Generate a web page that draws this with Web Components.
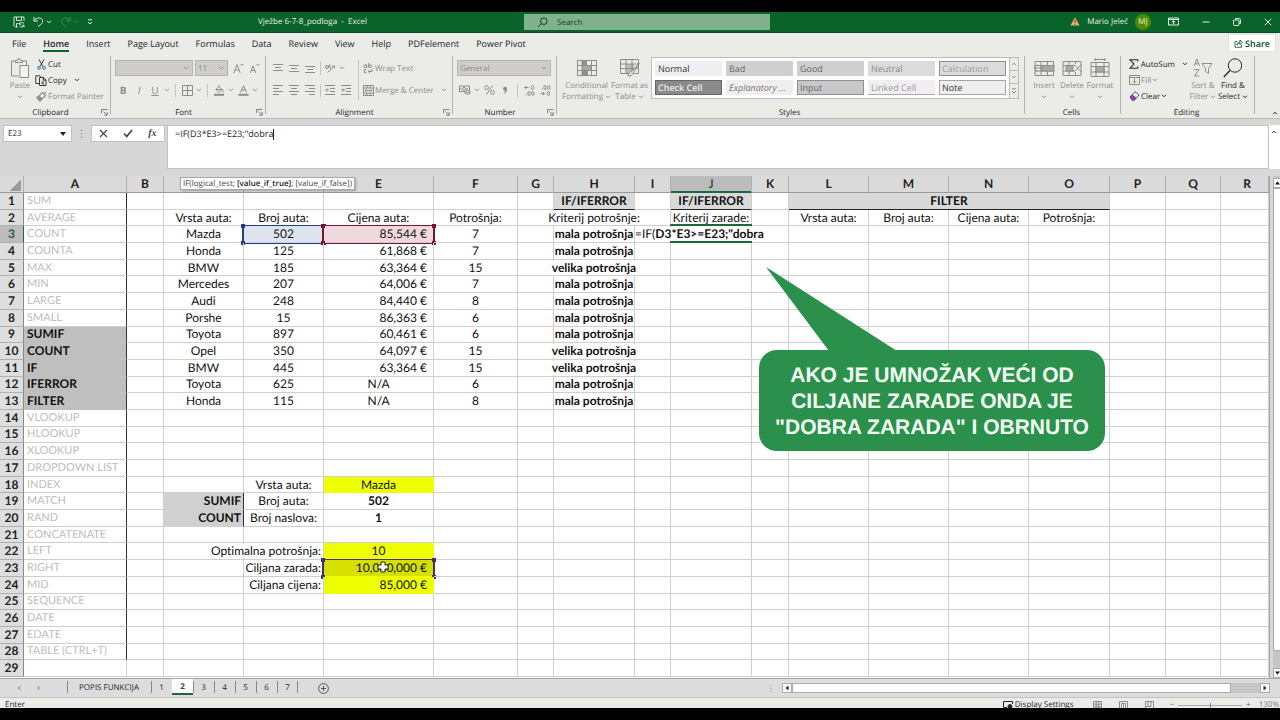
<!DOCTYPE html>
<html lang="hr">
<head>
<meta charset="utf-8">
<meta name="viewport" content="width=device-width, initial-scale=1">
<title>Vježbe 6-7-8_podloga - Excel</title>
<style>
    body{
        margin: 0;
        background: #000;
        font-family: "Open Sans", "Noto Sans", sans-serif;
        font-size: 8px;
        color: #262626;
        text-rendering: geometricPrecision;
        font-variant-ligatures: none;
    }
</style>
</head>
<body>
<excel-app></excel-app>
<script>
const svg = (w, h, body, extra = "") =>
    `<svg width="${w}" height="${h}" viewBox="0 0 ${w} ${h}" fill="none" stroke="currentColor" ${extra} aria-hidden="true">${body}</svg>`;

const ICONS = {
    chevron: svg(6, 4, `<path d="M1 .8 3 2.8 5 .8"/>`),
    up: svg(6, 4, `<path d="M1 3.2 3 1.2 5 3.2"/>`),
    more: svg(6, 6, `<path d="M1 .8H5M1 3 3 5 5 3"/>`),
    save: svg(12, 12, `<path d="M5 11H2.500L1 9.500V1H11V5M3.500 1V4.500H8.500V1M3.500 11V7.500H5.500M11 7.500A2.600 2.600 0 0 0 6.500 8.200M6.500 6.500V8.300H8.300M6.500 10A2.600 2.600 0 0 0 11 9.400M11 11.200V9.300H9.200" stroke-width=".9"/>`),
    undo: svg(11, 11, `<path d="M1 1V5H5M1.200 4.800C3 1.500 8 1 9.300 3.800 10.400 6.600 8 8.500 5 10.500"/>`),
    redo: svg(11, 11, `<path d="M10 1V5H6M9.800 4.800C8 1.500 3 1 1.700 3.800 .6 6.600 3 8.500 6 10.500"/>`),
    search: svg(11, 11, `<circle cx="6.800" cy="4.200" r="3.300"/><path d="M4.400 6.600 1 10"/>`),
    warn: svg(10, 9, `<path d="M5 .5 9.600 8.500H.4Z" fill="#f3b26b" stroke="none"/><path d="M5 3V6M5 6.800V7.800" stroke="#6b3500"/>`),
    ribbonView: svg(11, 9, `<path d="M.5 1H10.500V8H.5ZM.5 2.500H10.500M5.500 7V3.800M3.800 5.200 5.500 3.600 7.200 5.200"/>`),
    min: svg(8, 8, `<path d="M.5 4H7.500"/>`),
    restore: svg(8, 8, `<rect x=".5" y="2" width="5.500" height="5.500" rx="1"/><path d="M2.500 1.800V.6H6.300Q7.400 .6 7.400 1.800V5.500H6"/>`),
    close: svg(8, 8, `<path d="M.8 .8 7.200 7.200M7.200 .8 .8 7.200"/>`),
    share: svg(9, 9, `<path d="M3 2.500H1V8.300H7.500V6M2.800 6C3 3.800 4.500 3 6 3V1L8.500 3.500 6 5.500V4.200C4.500 4.200 3.500 4.800 2.800 6Z" stroke-width=".8"/>`),
    paste: svg(20, 22, `<path d="M9 19H1.500V4H5M13 4H16.500V8"/><path d="M5.500 5.500V3.500H7.500Q7.500 1.500 9 1.500T10.500 3.500H12.500V5.500Z"/><rect x="10" y="8.500" width="8.500" height="12" fill="#f4f4f4"/>`),
    cut: svg(9, 11, `<path d="M2 .5 6 7.500M7 .5 3 7.500" stroke="#333"/><circle cx="2" cy="8.800" r="1.400" stroke="#1b7a9c"/><circle cx="7" cy="8.800" r="1.400" stroke="#1b7a9c"/>`),
    copy: svg(12, 11, `<path d="M4 8.500H.8V.8H5L6 1.800M4.500 2.500H8.500L11 5V10.500H4.500ZM8.300 2.500V5.200H11M6.500 7H9M6.500 8.700H9" stroke-width=".9"/>`),
    painter: svg(11, 11, `<path d="M6.500 1.500 9.500 4.500 6 8 3 5ZM8 3 10 .8M3 5 .8 6.500 4 10.200 6 8M2.500 7.500 4 6.500" stroke-width="1.200"/><path d="M1.500 7 3.500 6 5.500 8 4 9.800Z" fill="currentColor"/>`),
    borders: svg(11, 11, `<path d="M.5 .5H10.500V10.500H.5ZM5.500 .5V10.500M.5 5.500H10.500"/>`),
    fill: svg(12, 11, `<path d="M3 4.500 6 1.500 9 4.500 6 7.500 3 4.500H9M6 1.500V0M9.500 4.500Q11 6 10 7.300"/><path d="M1 9.800H11" stroke-width="2"/>`),
    fontColor: svg(11, 11, `<path d="M2.500 7.500 5.500 .8 8.500 7.500M3.600 5H7.400"/><path d="M.5 9.800H10.500" stroke-width="2"/>`),
    bigA: svg(11, 11, `<path d="M.8 10 4 1.500 7.200 10M1.900 7H6.100M7.500 2.500 9 1 10.500 2.500"/>`),
    smallA: svg(11, 11, `<path d="M1.200 10 4 3 6.800 10M2.200 7.500H5.800M7.500 1 9 2.500 10.500 1"/>`),
    top: svg(10, 10, `<path d="M0 1.500H10M2 4.500H8M0 7.500H10"/>`),
    middle: svg(10, 10, `<path d="M0 2.500H10M2 5.500H8M0 8.500H10"/>`),
    bottom: svg(10, 10, `<path d="M0 3.500H10M2 6.500H8M0 9.500H10"/>`),
    left: svg(10, 10, `<path d="M0 .5H10M0 3.500H6M0 6.500H10M0 9.500H6"/>`),
    center: svg(10, 10, `<path d="M0 .5H10M2 3.500H8M0 6.500H10M2 9.500H8"/>`),
    right: svg(10, 10, `<path d="M0 .5H10M4 3.500H10M0 6.500H10M4 9.500H10"/>`),
    rotate: svg(12, 11, `<circle cx="3" cy="4" r="1.500"/><path d="M4 2 7 6M3.500 9.500 10.500 3M8 3H10.500V5.500M5.500 1.500 6.500 4"/>`),
    outdent: svg(10, 10, `<path d="M0 .5H10M5 3.500H10M5 6.500H10M0 9.500H10M4 5H.8M2.300 3.500 .8 5 2.300 6.500"/>`),
    indent: svg(10, 10, `<path d="M0 .5H10M5 3.500H10M5 6.500H10M0 9.500H10M0 5H3.500M2 3.500 3.500 5 2 6.500"/>`),
    wrap: svg(10, 11, `<circle cx="2.200" cy="3.200" r="1.400"/><path d="M3.700 1.500V4.800M5.800 0V4.800"/><circle cx="7.300" cy="3.200" r="1.400"/><path d="M3.300 6.600H1.200V9.600H3.300M9 5.800V8.500H5.500M7 6.800 5.300 8.500 7 10.200"/>`),
    merge: svg(11, 11, `<path d="M.5 .5H10.500V10.500H.5ZM.5 3H10.500M.5 8H10.500M4 .5V3M7 .5V3M4 8V10.500M7 8V10.500M2 5.500H9M3.500 4.200 2 5.500 3.500 6.800M7.500 4.200 9 5.500 7.500 6.800"/>`),
    money: svg(12, 10, `<rect x=".5" y="1" width="10" height="5.500"/><circle cx="5" cy="3.700" r="1.500"/><path d="M2 3V5M8 3V5"/><ellipse cx="8.500" cy="6.500" rx="2.500" ry="1" fill="#ebebe8"/><path d="M6 6.500V8.500Q8.500 10 11 8.500V6.500"/>`),
    percent: svg(11, 10, `<circle cx="2.600" cy="2.600" r="1.900"/><circle cx="8.400" cy="7.400" r="1.900"/><path d="M8.500 .5 2.500 9.500"/>`),
    comma: svg(6, 9, `<path d="M3 .8A2 2 0 1 0 3 4.800Q3 6.500 1.500 8 5 7 5 3 5 .8 3 .8Z" fill="currentColor" stroke="none"/>`),
    decInc: svg(11, 11, `<path d="M4.500 2.500H.8M2.300 1 .8 2.500 2.300 4"/><ellipse cx="8.500" cy="2.500" rx="1.300" ry="1.900"/><ellipse cx="5" cy="8.500" rx="1.200" ry="1.900"/><ellipse cx="8.800" cy="8.500" rx="1.200" ry="1.900"/><path d="M2 9.500V10.500"/>`),
    decDec: svg(11, 11, `<ellipse cx="5" cy="2.500" rx="1.200" ry="1.900"/><ellipse cx="8.800" cy="2.500" rx="1.200" ry="1.900"/><path d="M2.500 3.500V4.500M.5 8.500H4.500M3 7 4.500 8.500 3 10"/><ellipse cx="8.500" cy="8.500" rx="1.300" ry="1.900"/>`),
    condFormat: svg(20, 18, `<rect x="5" y="1" width="5" height="5" fill="#8f8f8f" stroke="none"/><rect x="5" y="6" width="9" height="5" fill="#a8a8a8" stroke="none"/><rect x="5" y="11" width="6" height="5" fill="#8f8f8f" stroke="none"/><path d="M.5 1.500H19.500V16.500H.5ZM.5 6.500H19.500M.5 11.500H19.500M5 1.500V16.500M14.500 1.500V16.500"/>`),
    formatTable: svg(20, 20, `<rect x="6" y="6" width="8" height="9" fill="#bdbdbd" stroke="none"/><path d="M.5 1.500H18.500V15.500H.5ZM.5 6H18.500M.5 10.500H18.500M6 1.500V15.500M12 1.500V15.500"/><path d="M19.500 5 12 13Q8.500 13 8 18 12 18.500 13.500 14.500Z" fill="#d9d9d9"/>`),
    insertCells: svg(22, 18, `<path d="M2 2.500H20.500V16.500H2ZM2 6.500H20.500M2 12H20.500M8 2.500V16.500M14.500 2.500V16.500"/><rect x="8" y="6.500" width="13" height="5.500" fill="#a8a8a8"/><path d="M11 9H1M4.500 5.500 1 9 4.500 12.500"/>`),
    deleteCells: svg(22, 18, `<path d="M2 2.500H20V16.500H2ZM2 6.500H13M2 12H13M8 2.500V16.500M14.500 2.500V5M14.500 13V16.500"/><rect x="5" y="6.500" width="7" height="5.500" fill="#a8a8a8"/><path d="M13 5.500 20.500 13M20.500 5.500 13 13"/>`),
    formatCells: svg(20, 20, `<path d="M1 4.500H19V18.500H1ZM1 8.500H19M1 14H19M6 4.500V18.500M14 4.500V18.500M5 1.500H15M5 0V3M15 0V3"/><rect x="6" y="8.500" width="8" height="5.500" fill="#a8a8a8"/>`),
    sum: svg(10, 10, `<path d="M8.800 2.500V.8H1L5 5 1 9.200H8.800V7.500" stroke-width="1.100"/>`),
    fillDown: svg(11, 10, `<path d="M.5 .5H10.500V9.500H.5ZM.5 2.500H10.500M5.500 3.500V8M3.800 6.300 5.500 8 7.200 6.300"/>`),
    eraser: svg(11, 10, `<path d="M1 6 6 .8 10 4 5 9.300H3.500Z" stroke="#6d4380" fill="#fff"/><path d="M1 6 3.200 3.700 7.200 7.200 5 9.300H3.500Z" fill="#8d3fa8" stroke="#6d4380"/>`),
    sort: svg(20, 20, `<path d="M1 8 3.800 1 6.600 8M2 5.800H5.600M1.500 11.500H6L1.500 18H6.200"/><path d="M9 5.500H19L15.500 10.500V15.500L12.500 13.500V10.500Z"/>`),
    find: svg(20, 20, `<circle cx="12" cy="7.500" r="6.700"/><path d="M7 12.500 .8 19" stroke-width="1.300"/>`),
    launch: svg(7, 7, `<path d="M.5 4V.5H6.500M2.500 2.500 6 6M6.200 3V6.200H3" stroke-width=".9"/>`),
    cancel: svg(9, 9, `<path d="M1 1 8 8M8 1 1 8" stroke-width="1.200"/>`),
    check: svg(10, 9, `<path d="M1 4.500 3.800 7.500 9 1" stroke-width="1.700"/>`),
    triangle: svg(6, 4, `<path d="M0 0H6L3 4Z" fill="currentColor" stroke="none"/>`),
    triUp: svg(5, 4, `<path d="M0 3.500H5L2.500 .5Z" fill="currentColor" stroke="none"/>`),
    triDown: svg(5, 4, `<path d="M0 .5H5L2.500 3.500Z" fill="currentColor" stroke="none"/>`),
    triLeft: svg(4, 6, `<path d="M3.500 .5V5.500L.5 3Z" fill="currentColor" stroke="none"/>`),
    triRight: svg(4, 6, `<path d="M.5 .5V5.500L3.500 3Z" fill="currentColor" stroke="none"/>`),
    plus: svg(11, 11, `<circle cx="5.500" cy="5.500" r="4.900"/><path d="M5.500 3V8M3 5.500H8"/>`),
    display: svg(10, 8, `<path d="M4 6.500H.5V.5H9.500V3M2 8H4"/><circle cx="7" cy="5.500" r="2" fill="currentColor"/>`),
    viewNormal: svg(9, 9, `<path d="M.5 .5H8.500V8.500H.5ZM3.200 .5V8.500M5.800 .5V8.500M.5 3.200H8.500M.5 5.800H8.500" stroke-width=".8"/>`),
    viewPage: svg(9, 9, `<path d="M.5 .5H8.500V8.500H.5ZM2.500 2.500H6.500V8.500M2.500 2.500V8.500M4.500 3V8.500" stroke-width=".8"/>`),
    viewBreak: svg(9, 9, `<path d="M.5 8.500V.5H8.500V8.500M3 .5V5.500H6V.5M.5 5.500H3" stroke-width=".8"/>`),
    cross: svg(12, 12, `<path d="M4 1H8V4H11V8H8V11H4V8H1V4H4Z" fill="#fff" stroke="#222"/>`)
};

const resetStyles = `
    button, input, select, textarea{
        font: inherit;
        color: inherit;
        text-rendering: inherit;
        margin: 0;
        padding: 0;
        border: 0;
        border-radius: 0;
        background: none;
        box-sizing: border-box;
    }
    svg{
        display: block;
        flex: none;
    }
`;

class BaseElement extends HTMLElement{
    constructor(){
        super();
        this.attachShadow({mode: "open"});
    }
    connectedCallback(){
        const template = document.createElement("template");
        template.innerHTML = `<style>${resetStyles}${this.getStyles()}</style>${this.getTemplate()}`;
        this.shadowRoot.replaceChildren(template.content.cloneNode(true));
    }
}

class TitleBar extends BaseElement{
    getTemplate(){
        return `
            <div class="left">
                <button aria-label="Save">${ICONS.save}</button>
                <button aria-label="Undo">${ICONS.undo}${ICONS.chevron}</button>
                <button class="dim" aria-label="Redo">${ICONS.redo}${ICONS.chevron}</button>
                <button aria-label="Customize">${ICONS.more}</button>
                <span class="title">Vježbe 6-7-8_podloga&nbsp; -&nbsp; Excel</span>
            </div>
            <label class="search">${ICONS.search}<input type="text" placeholder="Search" aria-label="Search"></label>
            <div class="right">
                ${ICONS.warn}
                <span>Mario Jeleč</span>
                <span class="avatar">MJ</span>
                <button aria-label="Ribbon display">${ICONS.ribbonView}</button>
                <button aria-label="Minimize">${ICONS.min}</button>
                <button aria-label="Restore">${ICONS.restore}</button>
                <button aria-label="Close">${ICONS.close}</button>
            </div>
        `;
    }
    getStyles(){
        return `
            :host{
                display: grid;
                grid-template-columns: minmax(0, 1fr) 246px 510px;
                height: 20px;
                background: #0b632c;
                border-bottom: 1px solid #064a1e;
                color: #e4f2e6;
            }
            .left, .right, .search, button{
                display: flex;
                align-items: center;
            }
            .left, .right{
                padding-bottom: 1px;
            }
            .left{
                padding-left: 13px;
                gap: 8px;
            }
            button{
                gap: 2px;
            }
            .dim{
                opacity: .25;
            }
            .title{
                margin: 0 auto;
            }
            .search{
                margin: 2px 0;
                background: #7fb18d;
                color: #12401f;
                padding-left: 13px;
                gap: 9px;
            }
            .search input{
                width: 120px;
            }
            .search input::placeholder{
                color: #12401f;
                opacity: 1;
            }
            .right{
                justify-content: flex-end;
                padding-right: 8px;
            }
            .right span{
                margin-left: 7px;
            }
            .right .avatar{
                width: 16px;
                line-height: 16px;
                border-radius: 8px;
                background: #4f8a00;
                text-align: center;
            }
            .right button{
                margin-left: 23px;
            }
            .right .avatar + button{
                margin-left: 17px;
            }
        `;
    }
}
customElements.define("title-bar", TitleBar);

class RibbonTabs extends BaseElement{
    getTemplate(){
        const tabs = ["File", "Home", "Insert", "Page Layout", "Formulas", "Data", "Review", "View", "Help", "PDFelement", "Power Pivot"];
        return `
            <nav>${tabs.map(t => `<button class="${t === "Home" ? "active" : ""}">${t}</button>`).join("")}</nav>
            <button class="share">${ICONS.share}Share</button>
        `;
    }
    getStyles(){
        return `
            :host{
                display: flex;
                justify-content: space-between;
                height: 20px;
                font-size: 9px;
            }
            nav{
                display: flex;
                gap: 17px;
                padding-left: 12px;
            }
            nav button{
                height: 18px;
                padding-top: 2px;
                margin-top: 1px;
                border-bottom: 2px solid transparent;
            }
            nav .active{
                font-weight: 600;
                border-color: #0b632c;
            }
            .share{
                display: flex;
                align-items: center;
                gap: 2px;
                height: 16px;
                margin: 2px 5px 0 0;
                padding: 0 5px;
                background: #fff;
                color: #0b4f28;
                font-weight: 600;
                box-shadow: 0 0 1px #aaa;
            }
        `;
    }
}
customElements.define("ribbon-tabs", RibbonTabs);

// A titled block of the ribbon, its controls go in the slot
class RibbonGroup extends BaseElement{
    getTemplate(){
        return `
            <div class="body"><slot></slot></div>
            <div class="label"><span>${this.getAttribute("label")}</span>
                ${this.hasAttribute("launcher") ? `<button aria-label="More options">${ICONS.launch}</button>` : ""}
            </div>
        `;
    }
    getStyles(){
        return `
            :host{
                display: flex;
                flex-direction: column;
                box-sizing: border-box;
                background: linear-gradient(#b4b4b2, #b4b4b2) right top / 1px 58px no-repeat;
            }
            .body{
                display: flex;
                height: 50px;
            }
            .label{
                display: flex;
                align-items: center;
                height: 12px;
                padding-right: 3px;
            }
            .label span{
                flex: 1;
                text-align: center;
            }
            .label button{
                color: #777;
            }
        `;
    }
}
customElements.define("ribbon-group", RibbonGroup);

class ExcelRibbon extends BaseElement{
    button(icon, label, width = ""){
        return `<button class="ib ${width}" aria-label="${label}">${ICONS[icon]}</button>`;
    }
    big(icon, lines, chevron = true, cls = ""){
        const text = lines.map((l, i) => `<span>${l}${chevron && lines.length > 1 && i === lines.length - 1 ? ICONS.chevron : ""}</span>`).join("");
        const below = lines.length === 1 ? `<span>${ICONS.chevron}</span>` : "";
        return `<button class="big ${cls}"><i>${ICONS[icon]}</i>${text}${below}</button>`;
    }
    getTemplate(){
        const chev = `<button class="chev" aria-label="Open menu">${ICONS.chevron}</button>`;
        const styles = [["Normal", "normal"], ["Bad", "bad"], ["Good", "bad"], ["Neutral", "neutral"], ["Calculation", "calc"],
            ["Check Cell", "checkcell"], ["Explanatory ...", "expl"], ["Input", "input"], ["Linked Cell", "linked"], ["Note", "note"]];
        return `
            <ribbon-group class="clipboard" label="Clipboard" launcher>
                ${this.big("paste", ["Paste"])}
                <div class="col">
                    <button class="item on"><i>${ICONS.cut}</i>Cut</button>
                    <button class="item on"><i>${ICONS.copy}</i>Copy<b>${ICONS.chevron}</b></button>
                    <button class="item"><i>${ICONS.painter}</i>Format Painter</button>
                </div>
            </ribbon-group>
            <ribbon-group class="font" label="Font" launcher>
                <div class="rows">
                    <div class="row gap">
                        <div class="combo family"><select aria-label="Font"><option></option></select>${ICONS.chevron}</div>
                        <div class="combo size"><select aria-label="Font size"><option>11</option></select>${ICONS.chevron}</div>
                        ${this.button("bigA", "Increase font size")}${this.button("smallA", "Decrease font size")}
                    </div>
                    <div class="row">
                        <button class="ib glyph"><strong>B</strong></button>
                        <button class="ib glyph"><em>I</em></button>
                        <button class="ib glyph"><u>U</u></button>${chev}
                        <span class="sep"></span>${this.button("borders", "Borders")}${chev}
                        <span class="sep"></span>${this.button("fill", "Fill color")}${chev}${this.button("fontColor", "Font color")}${chev}
                    </div>
                </div>
            </ribbon-group>
            <ribbon-group class="alignment" label="Alignment" launcher>
                <div class="rows">
                    <div class="row">
                        ${this.button("top", "Top align")}${this.button("middle", "Middle align")}${this.button("bottom", "Bottom align")}
                        <span class="sep thin"></span>${this.button("rotate", "Orientation")}${chev}
                    </div>
                    <div class="row">
                        ${this.button("left", "Align left")}${this.button("center", "Center")}${this.button("right", "Align right")}
                        <span class="sep thin"></span>${this.button("outdent", "Decrease indent")}${this.button("indent", "Increase indent")}
                    </div>
                </div>
                <span class="sep tall"></span>
                <div class="rows">
                    <button class="row item"><i>${ICONS.wrap}</i>Wrap Text</button>
                    <button class="row item"><i>${ICONS.merge}</i>Merge &amp; Center<b>${ICONS.chevron}</b></button>
                </div>
            </ribbon-group>
            <ribbon-group class="number" label="Number" launcher>
                <div class="rows">
                    <div class="row">
                        <div class="combo general"><select aria-label="Number format"><option>General</option></select>${ICONS.chevron}</div>
                    </div>
                    <div class="row">
                        ${this.button("money", "Accounting format")}${chev}${this.button("percent", "Percent")}${this.button("comma", "Comma style")}
                        <span class="sep"></span>${this.button("decInc", "Increase decimal")}${this.button("decDec", "Decrease decimal")}
                    </div>
                </div>
            </ribbon-group>
            <ribbon-group class="styles" label="Styles">
                ${this.big("condFormat", ["Conditional", "Formatting"], true, "wide")}
                ${this.big("formatTable", ["Format as", "Table"], true, "wide")}
                <div class="gallery">
                    ${styles.map(([name, cls]) => `<button class="${cls}">${name}</button>`).join("")}
                </div>
                <div class="scroll">
                    <button aria-label="Previous styles">${ICONS.up}</button>
                    <button aria-label="Next styles">${ICONS.chevron}</button>
                    <button aria-label="More styles">${ICONS.more}</button>
                </div>
            </ribbon-group>
            <ribbon-group class="cells" label="Cells">
                ${this.big("insertCells", ["Insert"])}${this.big("deleteCells", ["Delete"])}${this.big("formatCells", ["Format"])}
            </ribbon-group>
            <ribbon-group class="editing" label="Editing">
                <div class="col">
                    <button class="item on"><i>${ICONS.sum}</i>AutoSum<b>${ICONS.chevron}</b></button>
                    <button class="item"><i>${ICONS.fillDown}</i>Fill ${ICONS.chevron}</button>
                    <button class="item on"><i>${ICONS.eraser}</i>Clear ${ICONS.chevron}</button>
                </div>
                ${this.big("sort", ["Sort &amp;", "Filter"])}${this.big("find", ["Find &amp;", "Select"], true, "on")}
            </ribbon-group>
            <button class="collapse" aria-label="Collapse ribbon">${ICONS.up}</button>
        `;
    }
    getStyles(){
        return `
            :host{
                display: flex;
                box-sizing: border-box;
                height: 66px;
                padding-top: 3px;
                border-bottom: 1px solid #b9b9b7;
                color: #8c8c8a;
            }
            ribbon-group{
                color: #262626;
                flex: none;
            }
            .clipboard{ width: 111px; }
            .font{ width: 155px; }
            .alignment{ width: 187px; }
            .number{ width: 104px; }
            .styles{ flex: 1; }
            .cells{ width: 96px; }
            .editing{ width: 134px; }
            button, .combo{
                color: #8c8c8a;
                white-space: nowrap;
            }
            .on{
                color: #262626;
            }
            .big{
                display: flex;
                flex-direction: column;
                align-items: center;
                width: 28px;
                line-height: 11px;
            }
            .big.wide{
                width: 43px;
            }
            .big i{
                display: flex;
                align-items: center;
                height: 24px;
            }
            .big span{
                display: flex;
                align-items: center;
                gap: 2px;
                height: 11px;
            }
            .clipboard .big{
                margin: 0 1px 0 6px;
            }
            .col{
                display: flex;
                flex-direction: column;
            }
            .item{
                display: flex;
                align-items: center;
                gap: 1px;
                height: 16px;
            }
            .item i{
                display: flex;
                justify-content: center;
                width: 12px;
            }
            .item b{
                padding-left: 6px;
            }
            .rows{
                padding: 1px 0 0 4px;
            }
            .row{
                display: flex;
                align-items: center;
                height: 22px;
            }
            .gap .combo{
                margin-right: 2px;
            }
            .ib{
                display: flex;
                justify-content: center;
                width: 16px;
            }
            .glyph{
                font-size: 10px;
            }
            .chev{
                width: 8px;
                padding-left: 1px;
            }
            .sep{
                width: 8px;
                height: 13px;
                background: linear-gradient(#c4c4c2, #c4c4c2) center / 1px 100% no-repeat;
            }
            .thin{
                width: 4px;
            }
            .tall{
                height: 40px;
                margin: 4px 0 0 auto;
            }
            .alignment .rows + .sep + .rows{
                padding-left: 0;
                width: 91px;
            }
            .combo{
                display: grid;
                grid-template-columns: 1fr 9px;
                align-items: center;
                height: 16px;
                box-sizing: border-box;
                background: #cfcdcc;
                border: 1px solid #b5b3b2;
            }
            .combo select{
                grid-area: 1 / 1 / 2 / 3;
                appearance: none;
                padding-left: 2px;
                width: 100%;
            }
            .combo svg{
                grid-area: 1 / 2;
            }
            .family{ width: 78px; }
            .size{ width: 33px; }
            .general{ width: 94px; }
            .styles .big:first-child{
                margin-left: 8px;
            }
            .gallery{
                display: grid;
                grid-template-columns: repeat(5, 67px);
                grid-auto-rows: 15px;
                gap: 4px;
                padding: 3px;
                height: 34px;
                margin-top: 1px;
                border: 1px solid #bcbcba;
                background: #fff;
            }
            .gallery button{
                text-align: left;
                padding-left: 3px;
                font-size: 9px;
                line-height: 13px;
                background: #f0eef0;
                color: #333;
            }
            .gallery .bad{ background: #d0ced0; color: #6a6a6a; }
            .gallery .neutral{ background: #dcdadc; color: #8a8a8a; }
            .gallery .calc{ background: #dcdadc; border: 1px solid #8f8f8f; padding-left: 2px; line-height: 11px; color: #9a9a9a; }
            .gallery .checkcell{ background: #8a8a8a; border: 1px solid #666; padding-left: 2px; line-height: 11px; color: #eee; font-weight: 600; }
            .gallery .expl{ font-style: italic; color: #777; }
            .gallery .input{ background: #c9c7c9; border: 1px solid #8f8f8f; padding-left: 2px; line-height: 11px; color: #666; }
            .gallery .linked{ color: #999; border-bottom: 1px solid #aaa; }
            .gallery .note{ border: 1px solid #a5a5a5; padding-left: 2px; line-height: 11px; }
            .scroll{
                display: grid;
                width: 9px;
                height: 42px;
                margin-top: 1px;
                border: 1px solid #bcbcba;
                border-left: 0;
                box-sizing: border-box;
            }
            .scroll button{
                display: flex;
                align-items: center;
                justify-content: center;
            }
            .scroll button + button{
                border-top: 1px solid #bcbcba;
            }
            .cells .big:first-child{
                margin-left: 5px;
            }
            .editing .col{
                width: 60px;
                margin-left: 7px;
            }
            .editing .big{
                width: 30px;
            }
            .collapse{
                display: flex;
                justify-content: flex-end;
                align-items: flex-end;
                width: 25px;
                padding: 0 2px 3px 0;
                color: #262626;
            }
        `;
    }
}
customElements.define("excel-ribbon", ExcelRibbon);

class FormulaBar extends BaseElement{
    getTemplate(){
        return `
            <div class="name"><input type="text" value="E23" aria-label="Name box"><button aria-label="Names">${ICONS.triangle}</button></div>
            <span class="dots">⋮</span>
            <div class="actions">
                <button aria-label="Cancel">${ICONS.cancel}</button>
                <button aria-label="Enter">${ICONS.check}</button>
                <button aria-label="Insert function"><em>fx</em></button>
            </div>
            <textarea aria-label="Formula" spellcheck="false">=IF(D3*E3&gt;=E23;"dobra</textarea>
            <button class="expand" aria-label="Collapse formula bar">${ICONS.up}</button>
        `;
    }
    getStyles(){
        return `
            :host{
                display: flex;
                align-items: flex-start;
                box-sizing: border-box;
                height: 57px;
                padding: 6px 0 0 3px;
                background: #d7d7d7;
            }
            .name, .actions{
                display: flex;
                align-items: center;
                box-sizing: border-box;
                height: 17px;
                background: #fff;
                border: 1px solid #c2c2c2;
            }
            .name{
                width: 69px;
                padding: 0 5px 0 4px;
            }
            .name input{
                flex: 1;
                width: 0;
            }
            .dots{
                width: 19px;
                line-height: 17px;
                text-align: center;
                font-size: 10px;
                color: #777;
            }
            .actions{
                width: 74px;
                justify-content: space-around;
                margin-right: 2px;
                color: #444;
            }
            .actions em{
                font: italic bold 10px "Liberation Serif", serif;
            }
            textarea{
                flex: 1;
                height: 44px;
                padding: 2px 7px;
                border: 1px solid #c2c2c2;
                background: linear-gradient(#222, #222) 105px 3px / 1px 11px no-repeat #fff;
                font-size: 9px;
                line-height: 12px;
                resize: none;
                overflow: hidden;
            }
            .expand{
                align-self: flex-start;
                height: 44px;
                padding: 0 3px 30px 2px;
                background: #fff;
            }
        `;
    }
}
customElements.define("formula-bar", FormulaBar);

class SpeechCallout extends BaseElement{
    getTemplate(){
        return `
            <svg width="346" height="84" viewBox="0 0 346 84" aria-hidden="true"><path d="M7 0 138 84H70Z" fill="#2a904c" stroke="none"/></svg>
            <p><slot></slot></p>
        `;
    }
    getStyles(){
        return `
            :host{
                display: block;
                width: 346px;
            }
            p{
                margin: -1px 0 0;
                padding: 13px 0 10px;
                border-radius: 18px;
                background: #2a904c;
                color: #f4fff4;
                font: bold 21px/26px "Liberation Sans", Arial, sans-serif;
                text-align: center;
                white-space: nowrap;
            }
        `;
    }
}
customElements.define("speech-callout", SpeechCallout);

const COLUMNS = { A: 103, B: 37, C: 80, D: 80, E: 110, F: 84, G: 36, H: 81, I: 36, J: 81, K: 37, L: 80, M: 80, N: 80, O: 81, P: 56, Q: 55, R: 0 };

const FUNCTIONS = ["SUM", "AVERAGE", "COUNT", "COUNTA", "MAX", "MIN", "LARGE", "SMALL", "SUMIF", "COUNT", "IF", "IFERROR", "FILTER",
    "VLOOKUP", "HLOOKUP", "XLOOKUP", "DROPDOWN LIST", "INDEX", "MATCH", "RAND", "CONCATENATE", "LEFT", "RIGHT", "MID",
    "SEQUENCE", "DATE", "EDATE", "TABLE (CTRL+T)"];

const CARS = [
    ["Mazda", "502", "85,544 €", "7"],
    ["Honda", "125", "61,868 €", "7"],
    ["BMW", "185", "63,364 €", "15"],
    ["Mercedes", "207", "64,006 €", "7"],
    ["Audi", "248", "84,440 €", "8"],
    ["Porshe", "15", "86,363 €", "6"],
    ["Toyota", "897", "60,461 €", "6"],
    ["Opel", "350", "64,097 €", "15"],
    ["BMW", "445", "63,364 €", "15"],
    ["Toyota", "625", "N/A", "6"],
    ["Honda", "115", "N/A", "8"]
];

class SheetGrid extends BaseElement{
    // cell address -> [text, classes]
    getCells(){
        const cells = {
            H1: ["IF/IFERROR", "head"], J1: ["IF/IFERROR", "head"], L1: ["FILTER", "head"],
            C2: ["Vrsta auta:"], D2: ["Broj auta:"], E2: ["Cijena auta:"], F2: ["Potrošnja:"],
            H2: ["Kriterij potrošnje:", "spill"], J2: ["Kriterij zarade:"],
            L2: ["Vrsta auta:"], M2: ["Broj auta:"], N2: ["Cijena auta:"], O2: ["Potrošnja:"],
            D18: ["Vrsta auta:"], E18: ["Mazda", "yellow"],
            C19: ["SUMIF", "tag"], D19: ["Broj auta:"], E19: ["502", "bold"],
            C20: ["COUNT", "tag"], D20: ["Broj naslova:"], E20: ["1", "bold"],
            D22: ["Optimalna potrošnja:", "end spill"], E22: ["10", "yellow"],
            D23: ["Ciljana zarada:", "end"], E23: ["10,000,000 €", "yellow money range purple"],
            D24: ["Ciljana cijena:", "end"], E24: ["85,000 €", "yellow money"]
        };
        FUNCTIONS.forEach((name, i) => {
            cells["A" + (i + 1)] = [name, i > 7 && i < 13 ? "fn marked" : "fn"];
        });
        CARS.forEach(([brand, count, price, usage], i) => {
            const row = i + 3;
            const big = usage === "15";
            cells["C" + row] = [brand];
            cells["D" + row] = [count];
            cells["E" + row] = [price, price === "N/A" ? "" : "money"];
            cells["F" + row] = [usage];
            cells["H" + row] = [big ? "velika potrošnja" : "mala potrošnja", big ? "bold spill" : "bold"];
        });
        cells.D3[1] = "range blue";
        cells.E3[1] = "money range red";
        cells.J3 = [`=IF(<b>D3*E3&gt;=E23;"dobra</b>`, "edit"];
        return cells;
    }
    getTemplate(){
        const letters = Object.keys(COLUMNS);
        const cells = this.getCells();
        // the formula tip lies over the letters of these two columns
        const covered = ["C", "D"];
        let rows = "";
        for (let r = 1; r <= 29; r++) {
            rows += `<tr><th scope="row" class="${r === 3 ? "current" : ""}">${r}</th>`;
            letters.forEach(l => {
                if (r === 1 && "MNO".includes(l)) return;
                const [text, cls = ""] = cells[l + r] || [""];
                rows += `<td class="${cls}" ${l + r === "L1" ? "colspan=4" : ""}>${text ? `<div><span>${text}</span></div>` : ""}</td>`;
            });
            rows += "</tr>";
        }
        return `
            <div class="sheet">
                <table>
                    <colgroup><col style="width: 24px">${letters.map(l => `<col ${COLUMNS[l] ? `style="width: ${COLUMNS[l]}px"` : ""}>`).join("")}</colgroup>
                    <thead><tr><th class="corner"></th>${letters.map(l => `<th scope="col" aria-label="${l}" class="${l === "J" ? "current" : ""}">${covered.includes(l) ? "" : l}</th>`).join("")}</tr></thead>
                    <tbody>${rows}</tbody>
                </table>
                <div class="tip">IF(logical_test; <b>[value_if_true]</b>; [value_if_false])</div>
                <div class="cursor">${ICONS.cross}</div>
                <speech-callout>AKO JE UMNOŽAK VEĆI OD<br>CILJANE ZARADE ONDA JE<br>"DOBRA ZARADA" I OBRNUTO</speech-callout>
            </div>
            <div class="vscroll">
                <button aria-label="Scroll up">${ICONS.triUp}</button>
                <div class="thumb"></div>
                <button aria-label="Scroll down">${ICONS.triDown}</button>
            </div>
        `;
    }
    getStyles(){
        return `
            :host{
                display: flex;
                gap: 3px;
                background: #d7d7d7;
                font-family: Lato, "Open Sans", sans-serif;
                font-size: 12px;
                color: #111;
            }
            .sheet{
                flex: 1;
                position: relative;
                height: 502px;
                background: #fff;
                box-sizing: border-box;
                border-right: 1px solid #a5a5a5;
            }
            table{
                table-layout: fixed;
                width: 100%;
                height: 501px;
                border-spacing: 0;
            }
            thead tr{
                height: 17px;
            }
            th, td{
                padding: 0;
                box-sizing: border-box;
                border-right: 1px solid #cfcfcf;
                border-bottom: 1px solid #cfcfcf;
                line-height: 14px;
            }
            th{
                background: #dedede;
                border-color: #b0b0b0;
                font-weight: 700;
                color: #222;
            }
            thead th{
                border-bottom-color: #999;
                background: #dadada;
            }
            tbody th{
                border-right-color: #888;
            }
            th:last-child{
                padding-left: 5px;
            }
            .corner{
                background: linear-gradient(135deg, transparent 50%, #9a9a9a 50%) right 2px bottom 1px / 12px 12px no-repeat #dadada;
            }
            th.current{
                background: #bcbcbc;
                color: #2b5a3d;
            }
            thead .current{
                border-bottom-color: #1c6a3c;
                box-shadow: inset 0 -1px #1c6a3c;
            }
            tbody .current{
                border-right-color: #1c6a3c;
            }
            td{
                position: relative;
            }
            td div{
                display: flex;
                justify-content: center;
                white-space: nowrap;
                height: 14px;
            }
            td:nth-child(2){
                border-right-color: #333;
            }
            tr:last-child td:nth-child(2){
                border-right-color: #cfcfcf;
            }
            .spill span{
                background: #fff;
            }
            .fn{
                color: #bdbdbd;
                font-size: 11px;
            }
            .fn div{
                justify-content: flex-start;
                padding-left: 3px;
            }
            td.marked{
                background: #bfbfbf;
                border-bottom-color: #bfbfbf;
                color: #111;
                font-size: 12px;
                font-weight: 700;
            }
            .bold, .head, .tag{
                font-weight: 700;
            }
            td.head{
                background: #d9d9d9;
                border-bottom-color: #222;
            }
            .end div, .tag div{
                justify-content: flex-end;
                padding-right: 2px;
            }
            td.tag{
                background: #d0d0d0;
                border-bottom-color: #d0d0d0;
                border-right-color: #333;
            }
            .money div{
                justify-content: flex-end;
                padding-right: 6px;
            }
            td.yellow{
                background: #eeff00;
                border-color: #eeff00;
            }
            .range::after{
                content: "";
                position: absolute;
                inset: -2px -3px -3px -3px;
                --line: linear-gradient(var(--c), var(--c));
                background:
                    var(--line) left top / 4px 4px, var(--line) right top / 4px 4px,
                    var(--line) left bottom / 4px 4px, var(--line) right bottom / 4px 4px,
                    var(--line) left 1px top 1px / calc(100% - 2px) 1px, var(--line) left 1px bottom 1px / calc(100% - 2px) 1px,
                    var(--line) left 1px top 1px / 2px calc(100% - 2px), var(--line) right 1px top 1px / 2px calc(100% - 2px);
                background-repeat: no-repeat;
            }
            td.blue{ --c: #1f3f86; background: #dde4f0; }
            td.red{ --c: #7c1430; background: #f0d9dc; }
            td.purple{ --c: #4a2a6a; background: #d6e000; }
            .edit::before{
                content: "";
                position: absolute;
                inset: -2px -1px -1px -1px;
                border: solid #1c6a3c;
                border-width: 2px 0;
            }
            /* the cell editor starts in the column before and grows over the next one */
            .edit div{
                position: relative;
                justify-content: flex-start;
                margin: 0 -36px;
            }
            .edit span{
                background: #fff;
            }
            .tip{
                position: absolute;
                left: 180px;
                top: 1px;
                padding: 0 2px;
                border: 1px solid #a8a8a8;
                background: #fff;
                box-shadow: 1px 1px 2px #0004;
                font: 8px/11px "Open Sans", sans-serif;
                color: #444;
            }
            .tip b{
                font-weight: 600;
                color: #222;
            }
            .cursor{
                position: absolute;
                left: 377px;
                top: 385px;
            }
            speech-callout{
                position: absolute;
                left: 759px;
                top: 91px;
            }
            .vscroll{
                display: flex;
                flex-direction: column;
                width: 7px;
                padding-top: 2px;
                background: #c6c6c6;
            }
            .vscroll button{
                height: 10px;
                padding-left: 1px;
                background: #fff;
                border: 1px solid #aaa;
                border-right: 0;
            }
            .thumb{
                flex: 1;
                margin-bottom: 17px;
                background: #fff;
                border: 1px solid #aaa;
                border-right: 0;
            }
        `;
    }
}
customElements.define("sheet-grid", SheetGrid);

class SheetTabs extends BaseElement{
    getTemplate(){
        return `
            <button class="nav" aria-label="Previous sheet">${ICONS.triLeft}</button>
            <button class="nav" aria-label="Next sheet">${ICONS.triRight}</button>
            <div class="tabs">
                <button class="wide">POPIS FUNKCIJA</button>
                ${[1, 2, 3, 4, 5, 6, 7].map(n => `<button class="${n === 2 ? "active" : ""}">${n}</button>`).join("")}
            </div>
            <button class="add" aria-label="New sheet">${ICONS.plus}</button>
            <span class="grip">⋮</span>
            <div class="hscroll">
                <button aria-label="Scroll left">${ICONS.triLeft}</button>
                <div></div>
                <button aria-label="Scroll right">${ICONS.triRight}</button>
            </div>
        `;
    }
    getStyles(){
        return `
            :host{
                display: flex;
                align-items: center;
                box-sizing: border-box;
                height: 19px;
                padding: 0 10px 0 9px;
                border-top: 1px solid #a5a5a5;
                background: #dcdcdc;
            }
            .nav{
                display: flex;
                justify-content: center;
                width: 20px;
                color: #aaa;
            }
            .tabs{
                display: flex;
                align-self: stretch;
                margin-left: 18px;
            }
            .tabs button{
                width: 21px;
                height: 16px;
                background: linear-gradient(#888, #888) left center / 1px 12px no-repeat;
            }
            .tabs .wide{
                width: 84px;
            }
            .tabs .active{
                background: #fff;
                border-bottom: 2px solid #1c6a3c;
                font-weight: 700;
                color: #14532d;
            }
            .tabs button:last-child{
                background: linear-gradient(#888, #888) left center / 1px 12px no-repeat, linear-gradient(#888, #888) right center / 1px 12px no-repeat;
            }
            .add{
                margin-left: 20px;
                color: #555;
            }
            .grip{
                margin-left: auto;
                margin-right: 7px;
                color: #888;
            }
            .hscroll{
                display: flex;
                width: 39%;
                max-width: 488px;
                height: 10px;
                background: #c6c6c6;
            }
            .hscroll div{
                flex: 1;
                margin-right: 29px;
            }
            .hscroll > *{
                background: #fff;
                border: 1px solid #aaa;
            }
            .hscroll button{
                width: 10px;
                padding-left: 2px;
            }
        `;
    }
}
customElements.define("sheet-tabs", SheetTabs);

class StatusBar extends BaseElement{
    getTemplate(){
        return `
            <span class="mode">Enter</span>
            <button>${ICONS.display}Display Settings</button>
            <button class="view" aria-label="Normal view">${ICONS.viewNormal}</button>
            <button class="view" aria-label="Page layout view">${ICONS.viewPage}</button>
            <button class="view" aria-label="Page break view">${ICONS.viewBreak}</button>
            <div class="zoom">
                <span>−</span><input type="range" min="10" max="400" value="205" aria-label="Zoom"><span>+</span>
            </div>
            <span class="percent">130%</span>
        `;
    }
    getStyles(){
        return `
            :host{
                display: flex;
                align-items: flex-start;
                height: 10px;
                padding: 0 1px 0 5px;
                overflow: hidden;
                border-top: 1px solid #c4c4c4;
                background: #ebebe8;
                line-height: 14px;
            }
            .mode{
                flex: 1;
            }
            button{
                display: flex;
                align-items: center;
                gap: 2px;
                height: 14px;
            }
            .view{
                margin-left: 17px;
                color: #777;
            }
            .mode + button{
                margin-right: 2px;
            }
            .zoom{
                display: flex;
                margin-left: 16px;
                gap: 4px;
                color: #666;
            }
            input{
                appearance: none;
                width: 64px;
                height: 14px;
                background: linear-gradient(#aaa, #aaa) center / 100% 1px no-repeat;
            }
            input::-webkit-slider-thumb{
                appearance: none;
                width: 1px;
                height: 5px;
                background: #888;
            }
            .percent{
                margin-left: 8px;
                color: #777;
            }
        `;
    }
}
customElements.define("status-bar", StatusBar);

class ExcelApp extends BaseElement{
    getTemplate(){
        return `
            <title-bar></title-bar>
            <ribbon-tabs></ribbon-tabs>
            <excel-ribbon></excel-ribbon>
            <formula-bar></formula-bar>
            <sheet-grid></sheet-grid>
            <sheet-tabs></sheet-tabs>
            <status-bar></status-bar>
        `;
    }
    getStyles(){
        return `
            :host{
                display: block;
                margin: 12px 0;
                background: #ebebe8;
                overflow: hidden;
            }
        `;
    }
}
customElements.define("excel-app", ExcelApp);
</script>
</body>
</html>
